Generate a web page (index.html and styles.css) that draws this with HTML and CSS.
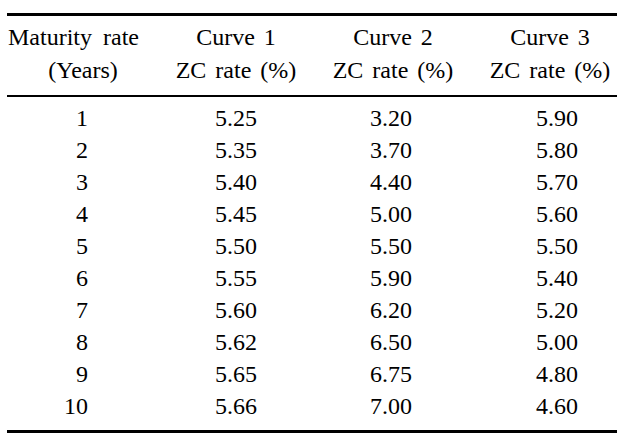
FILE: index.html
```html
<!DOCTYPE html>
<html>
<head>
<meta charset="utf-8">
<link rel="stylesheet" href="styles.css">
</head>
<body>
<div class="table">
  <div class="row head">
    <div class="cell c1"><span class="line left">Maturity rate</span><span class="line">(Years)</span></div>
    <div class="cell c2"><span class="line">Curve 1</span><span class="line">ZC rate (%)</span></div>
    <div class="cell c3"><span class="line">Curve 2</span><span class="line">ZC rate (%)</span></div>
    <div class="cell c4"><span class="line">Curve 3</span><span class="line">ZC rate (%)</span></div>
  </div>
  <div class="body">
    <div class="row"><div class="cell c1">1</div><div class="cell c2">5.25</div><div class="cell c3">3.20</div><div class="cell c4">5.90</div></div>
    <div class="row"><div class="cell c1">2</div><div class="cell c2">5.35</div><div class="cell c3">3.70</div><div class="cell c4">5.80</div></div>
    <div class="row"><div class="cell c1">3</div><div class="cell c2">5.40</div><div class="cell c3">4.40</div><div class="cell c4">5.70</div></div>
    <div class="row"><div class="cell c1">4</div><div class="cell c2">5.45</div><div class="cell c3">5.00</div><div class="cell c4">5.60</div></div>
    <div class="row"><div class="cell c1">5</div><div class="cell c2">5.50</div><div class="cell c3">5.50</div><div class="cell c4">5.50</div></div>
    <div class="row"><div class="cell c1">6</div><div class="cell c2">5.55</div><div class="cell c3">5.90</div><div class="cell c4">5.40</div></div>
    <div class="row"><div class="cell c1">7</div><div class="cell c2">5.60</div><div class="cell c3">6.20</div><div class="cell c4">5.20</div></div>
    <div class="row"><div class="cell c1">8</div><div class="cell c2">5.62</div><div class="cell c3">6.50</div><div class="cell c4">5.00</div></div>
    <div class="row"><div class="cell c1">9</div><div class="cell c2">5.65</div><div class="cell c3">6.75</div><div class="cell c4">4.80</div></div>
    <div class="row"><div class="cell c1">10</div><div class="cell c2">5.66</div><div class="cell c3">7.00</div><div class="cell c4">4.60</div></div>
  </div>
</div>
</body>
</html>
```
FILE: styles.css
```css
body {
  margin: 0;
  background: #fff;
  color: #000;
  font-family: "Liberation Serif", "Times New Roman", serif;
  font-size: 24px;
}

.table {
  margin: 13px 0 0 7px;
  width: 610px;
  border-top: 3px solid #000;
  border-bottom: 3px solid #000;
}

.row {
  display: grid;
  grid-template-columns: 150px 158px 156px 146px;
}

.cell {
  text-align: center;
}

.head {
  padding: 5px 0 8px;
  border-bottom: 2px solid #000;
  line-height: 33px;
  word-spacing: 3px;
}

.head .line {
  display: block;
  white-space: nowrap;
}

.head .left {
  text-align: left;
  padding-left: 1px;
  word-spacing: 5px;
}

.head .c1 .line:not(.left) {
  padding-left: 2px;
}

.head .c4 {
  padding-left: 12px;
}

.body {
  padding: 5px 0 8px;
  line-height: 32px;
}

.body .c1 {
  text-align: right;
  padding-right: 69px;
}

.body .c3 {
  padding-right: 4px;
}

.body .c4 {
  padding-left: 26px;
}
```
